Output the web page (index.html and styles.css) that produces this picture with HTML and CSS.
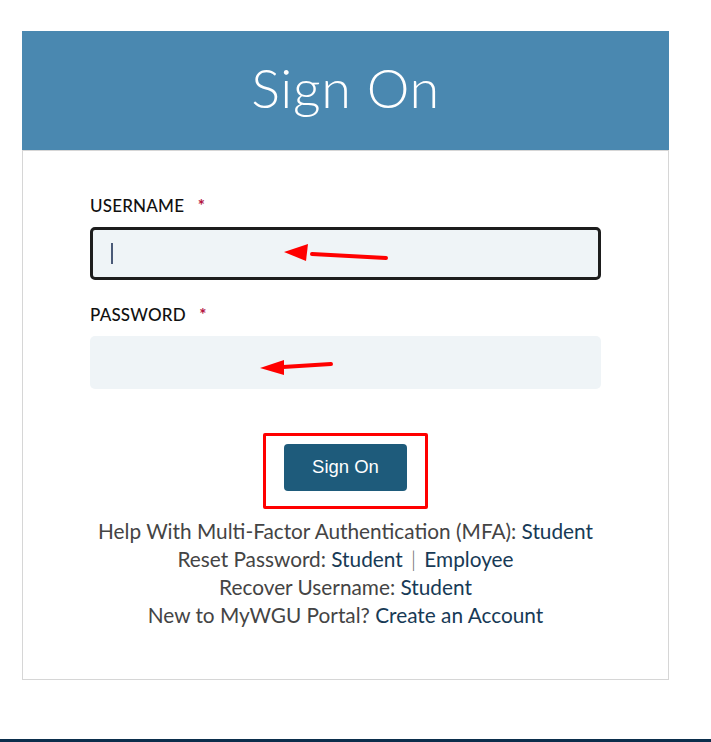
FILE: index.html
```html
<!DOCTYPE html>
<html lang="en">
<head>
<meta charset="utf-8">
<title>Sign On</title>
<link rel="stylesheet" href="styles.css">
</head>
<body>
<main class="page">
  <section class="card">
    <header class="card-head"><h1>Sign On</h1></header>
    <form class="card-body">
      <div class="field">
        <label class="label">USERNAME <span class="req">*</span></label>
        <div class="input focused"><span class="caret"></span></div>
        <svg class="arrow arrow-1" width="112" height="24" viewBox="0 0 112 24"><path d="M104 15 L30 11" stroke="#f00" stroke-width="4" stroke-linecap="round" fill="none"/><path d="M2 9 L26 1 L24 18 Z" fill="#f00"/></svg>
      </div>
      <div class="field">
        <label class="label">PASSWORD <span class="req">*</span></label>
        <div class="input"></div>
        <svg class="arrow arrow-2" width="80" height="24" viewBox="0 0 80 24"><path d="M72 8 L24 11" stroke="#f00" stroke-width="4" stroke-linecap="round" fill="none"/><path d="M1 12 L25 4 L25 19 Z" fill="#f00"/></svg>
      </div>
      <div class="actions">
        <button type="button" class="btn">Sign On</button>
        <span class="highlight"></span>
      </div>
      <div class="links">
        <p>Help With Multi-Factor Authentication (MFA): <a>Student</a></p>
        <p>Reset Password: <a>Student</a> <span class="sep">|</span> <a>Employee</a></p>
        <p>Recover Username: <a>Student</a></p>
        <p>New to MyWGU Portal? <a>Create an Account</a></p>
      </div>
    </form>
  </section>
</main>
<div class="footer-bar"></div>
</body>
</html>
```
FILE: styles.css
```css
html, body { margin: 0; padding: 0; background: #fff; }
body { width: 711px; height: 742px; overflow: hidden; position: relative; font-family: "Lato", "Liberation Sans", sans-serif; }
.page { padding: 31px 42px 0 22px; }
.card { width: 647px; box-sizing: border-box; border: 1px solid #d6d6d6; border-top: none; }
.card-head { background: #4a88b0; height: 119px; margin: 0 -1px; display: flex; align-items: center; justify-content: center; border-bottom: 1px solid #d6d6d6; }
.card-head h1 { margin: 0; color: #fff; font-weight: 300; font-size: 54px; letter-spacing: 0.6px; padding-bottom: 6px; }
.card-body { padding: 45px 67px 50px 67px; display: flex; flex-direction: column; }
.field { position: relative; display: flex; flex-direction: column; }
.field + .field { margin-top: 25px; }
.label { font-size: 17px; color: #111; line-height: 20px; height: 20px; font-weight: 500; letter-spacing: 0.2px; }
.req { color: #b3123e; margin-left: 9px; font-size: 17px; font-weight: 700; }
.input { margin-top: 11px; height: 53px; box-sizing: border-box; background: #eff4f7; border-radius: 5px; position: relative; }
.input.focused { border: 3px solid #1d1d1d; height: 53px; }
.caret { position: absolute; left: 18px; top: 13px; width: 2px; height: 21px; background: #4a5a78; }
.arrow { position: absolute; }
.arrow-1 { left: 192px; top: 47px; }
.arrow-2 { left: 169px; top: 51px; }
.actions { margin-top: 55px; display: flex; justify-content: center; position: relative; }
.btn { width: 123px; height: 47px; border: none; border-radius: 4px; background: #1e5b7b; color: #fff; font-family: "Liberation Sans", Arial, sans-serif; font-size: 18.5px; padding: 0; padding-bottom: 2px; }
.highlight { position: absolute; left: 173px; top: -11px; width: 165px; height: 76px; box-sizing: border-box; border: 3px solid #f00; border-radius: 2px; }
.links { margin-top: 26px; text-align: center; font-family: "Lato", "Open Sans", sans-serif; font-size: 20.8px; line-height: 28px; color: #444; }
.links p { margin: 0; }
.links a { color: #173a56; }
.links .sep { color: #666; font-weight: 300; margin: 0 3px; }
.footer-bar { position: absolute; left: 0; right: 0; bottom: 0; height: 3px; background: #0b2e4c; }
```
